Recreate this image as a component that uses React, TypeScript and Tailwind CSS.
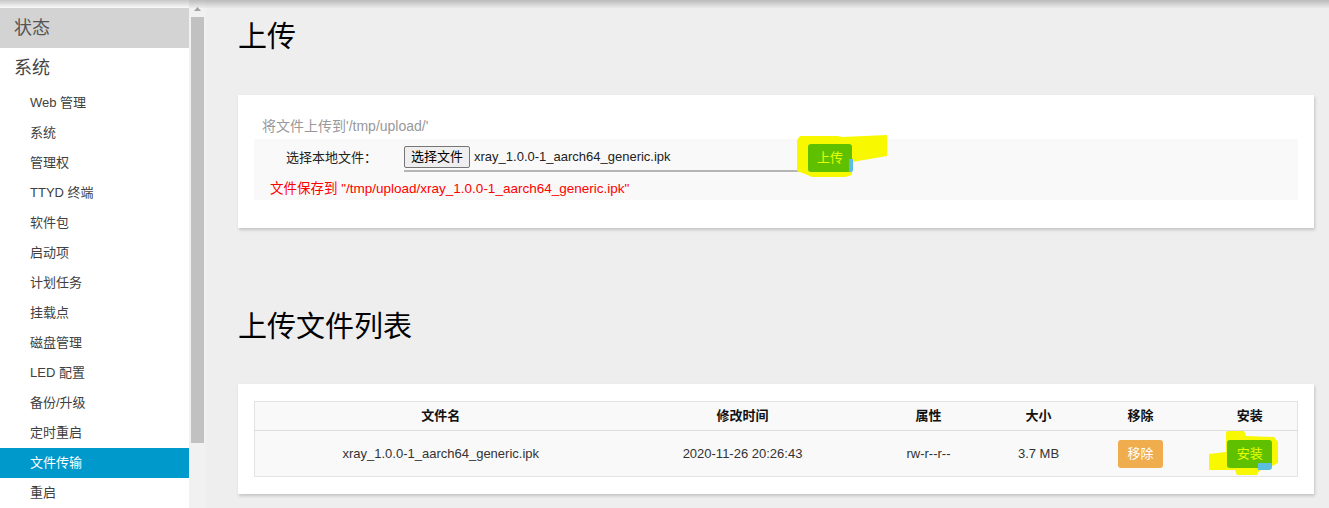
import React from "react";

const subItems = [
  "Web 管理",
  "系统",
  "管理权",
  "TTYD 终端",
  "软件包",
  "启动项",
  "计划任务",
  "挂载点",
  "磁盘管理",
  "LED 配置",
  "备份/升级",
  "定时重启",
  "文件传输",
  "重启",
];

function Sidebar() {
  return (
    <div className="flex shrink-0">
      <div className="w-[189px] bg-white pt-[8px] text-[#404040]">
        <div className="h-[40px] bg-[#d3d3d3] pl-[14px] text-[18px] leading-[40px] text-[#555]">状态</div>
        <div className="h-[40px] pl-[14px] text-[18px] leading-[40px] text-[#444]">系统</div>
        {subItems.map((s) => (
          <div
            key={s}
            className={
              s === "文件传输"
                ? "h-[30px] bg-[#0099cc] pl-[30px] text-[13px] leading-[30px] text-white"
                : "h-[30px] pl-[30px] text-[13px] leading-[30px] text-[#404040]"
            }
          >
            {s}
          </div>
        ))}
      </div>
      <div className="relative w-[17px] bg-[#f1f1f1]">
        <svg className="absolute left-[5px] top-[7px]" width="7" height="4" viewBox="0 0 7 4">
          <polygon points="0,4 3.5,0 7,4" fill="#a3a3a3" />
        </svg>
        <div className="absolute left-[2px] top-[17px] h-[426px] w-[13px] bg-[#c1c1c1]" />
      </div>
    </div>
  );
}

function UploadButton() {
  return (
    <div className="relative ml-[5px] mt-[1px] h-[28px] w-[44px] self-start">
      <svg className="absolute left-[-11px] top-[-9px]" width="92" height="44" viewBox="-11 -9 92 44">
        <path
          d="M-11,-4 L-8,-8 L30,-8 L34,-7 L79,-9 L79,12 L44,18 L44,31 L37,33 L4,33 L-3,30 L-11,27 Z"
          fill="#f8f800"
        />
      </svg>
      <div className="absolute inset-0 flex items-center justify-center rounded-[3px] bg-[#5fc000] text-[13px] text-[#e8ff00]">
        上传
      </div>
      <div className="absolute left-[41px] top-[15px] h-[13px] w-[4px] rounded-br-[2px] bg-[#5bbde0]" />
    </div>
  );
}

function InstallButton() {
  return (
    <div className="relative mx-auto h-[28px] w-[45px]">
      <svg className="absolute left-[-18px] top-[-9px]" width="70" height="44" viewBox="-18 -9 70 44">
        <path
          d="M0,-9 L17,-9 L19,-4 L47,-3 L51,2 L51,23 L45,26 L32,31 L30,35 L10,35 L8,30 L-18,30 L-18,14 L-1,12 L-1,-7 Z"
          fill="#f8f800"
        />
      </svg>
      <div className="absolute inset-0 flex items-center justify-center rounded-[3px] bg-[#5fc000] text-[13px] text-[#e8ff00]">
        安装
      </div>
      <div className="absolute left-[31px] top-[23px] h-[7px] w-[14px] rounded-br-[3px] bg-[#5bbde0]" />
    </div>
  );
}

export default function App() {
  return (
    <div className="relative flex h-[508px] w-[1329px] overflow-hidden bg-[#eeeeee] font-['Liberation_Sans','Noto_Sans_CJK_SC',sans-serif] text-[13px] text-[#333]">
      <Sidebar />
      <div className="flex-1 pl-[32px] pr-[15px] pt-[17px]">
        <h2 className="h-[40px] text-[29px] leading-[40px] text-black">上传</h2>
        <div className="mt-[38px] bg-white px-[16px] pb-[28px] pt-[21px] shadow-[1px_2px_3px_rgba(0,0,0,0.18)]">
          <div className="h-[20px] pl-[8px] text-[14px] leading-[20px] text-[#999]">将文件上传到'/tmp/upload/'</div>
          <div className="mt-[3px] bg-[#f9f9f9] pb-[1px] pt-[4px]">
            <div className="flex h-[30px] items-start">
              <div className="w-[150px] pl-[32px] leading-[30px] text-[#222]">选择本地文件：</div>
              <div className="flex h-[29px] w-[399px] items-center border-b-2 border-[#b5b5b5]">
                <button className="h-[22px] rounded-[2px] border border-[#767676] bg-[#efefef] px-[6px] text-[13px] leading-[20px] text-black">
                  选择文件
                </button>
                <span className="ml-[4px] text-[#222]">xray_1.0.0-1_aarch64_generic.ipk</span>
              </div>
              <UploadButton />
            </div>
            <div className="mt-[6px] h-[20px] pl-[16px] text-[13.5px] leading-[20px] text-[#ff0000]">
              文件保存到 "/tmp/upload/xray_1.0.0-1_aarch64_generic.ipk"
            </div>
          </div>
        </div>

        <h2 className="mt-[79px] h-[40px] text-[29px] leading-[40px] text-black">上传文件列表</h2>
        <div className="mt-[37px] bg-white px-[16px] py-[17px] shadow-[1px_2px_3px_rgba(0,0,0,0.18)]">
          <table className="w-full table-fixed border-collapse border border-[#e3e3e3] bg-[#f9f9f9]">
            <thead>
              <tr className="h-[29px] border-b border-[#dddddd]">
                <th className="w-[372px] font-bold text-[#111]">文件名</th>
                <th className="w-[232px] font-bold text-[#111]">修改时间</th>
                <th className="w-[140px] font-bold text-[#111]">属性</th>
                <th className="w-[80px] font-bold text-[#111]">大小</th>
                <th className="w-[124px] font-bold text-[#111]">移除</th>
                <th className="font-bold text-[#111]">安装</th>
              </tr>
            </thead>
            <tbody>
              <tr className="h-[46px]">
                <td className="text-center">xray_1.0.0-1_aarch64_generic.ipk</td>
                <td className="text-center">2020-11-26 20:26:43</td>
                <td className="text-center">rw-r--r--</td>
                <td className="text-center">3.7 MB</td>
                <td className="text-center">
                  <button className="h-[28px] w-[45px] rounded-[3px] bg-[#f0ad4e] text-[13px] text-white">移除</button>
                </td>
                <td>
                  <InstallButton />
                </td>
              </tr>
            </tbody>
          </table>
        </div>
      </div>
      <div className="pointer-events-none absolute left-0 right-0 top-0 h-[8px] bg-gradient-to-b from-[rgba(0,0,0,0.22)] to-[rgba(0,0,0,0.02)]" />
    </div>
  );
}
